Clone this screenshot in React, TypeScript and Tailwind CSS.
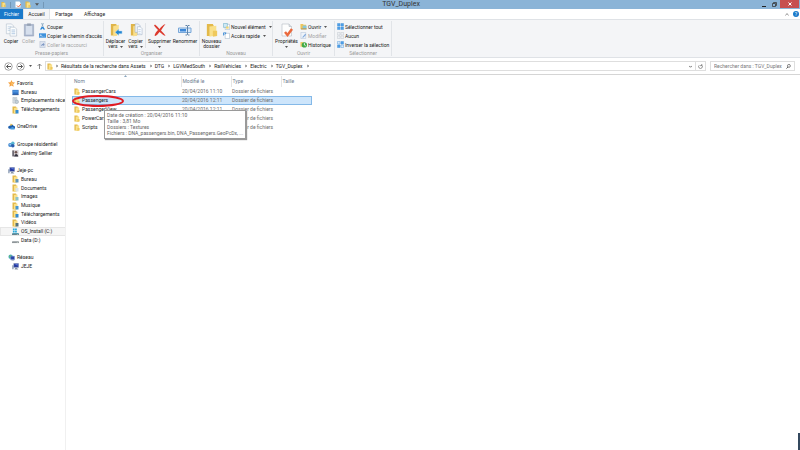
import type { ReactNode } from 'react';

type IconProps = { className?: string };

function Folder({ className = 'w-[7px] h-[8px]' }: IconProps) {
  return (
    <svg viewBox="0 0 14 16" className={`shrink-0 ${className}`}>
      <path d="M1 1h7l1 2v12H1z" fill="#e3b94a" />
      <path d="M4 4l8-1v11l-8 2z" fill="#f9e08a" />
      <path d="M8 9h5v6l-5 1z" fill="#efc95c" />
    </svg>
  );
}

function FolderWith({ color }: { color: string }) {
  return (
    <svg viewBox="0 0 14 16" className="w-[7px] h-[8px] shrink-0">
      <path d="M1 1h7l1 2v12H1z" fill="#e3b94a" />
      <path d="M4 4l7-1v11l-7 2z" fill="#f9e08a" />
      <path d="M7 8h6v7H7z" fill={color} />
    </svg>
  );
}

function Star() {
  return (
    <svg viewBox="0 0 16 16" className="w-[7px] h-[7px] shrink-0">
      <path d="M8 0l2.4 5.2 5.6.6-4.200 3.800L13 15.500 8 12.600 3 15.500l1.200-5.900L0 5.800l5.600-.6z" fill="#f5a03c" />
      <path d="M8 4l1.300 3 3 .4-2.300 2 .6 3L8 10.800z" fill="#fbcf7c" />
    </svg>
  );
}

function Desktop() {
  return (
    <svg viewBox="0 0 16 16" className="w-[7px] h-[7px] shrink-0">
      <path d="M1 2h14v11H1z" fill="#2f6fc2" />
      <path d="M2 3h12v5H2z" fill="#4c92dd" />
      <path d="M1 12h14v2H1z" fill="#234f8f" />
    </svg>
  );
}

function Recent() {
  return (
    <svg viewBox="0 0 16 16" className="w-[7px] h-[7px] shrink-0">
      <path d="M2 1h9v13H2z" fill="#dfe4e8" stroke="#9aa7b2" />
      <path d="M4 4h5M4 7h5" stroke="#8ca0b3" />
      <circle cx="11" cy="11" r="4" fill="#c3d0d9" stroke="#8c9aa5" />
    </svg>
  );
}

function Cloud() {
  return (
    <svg viewBox="0 0 16 16" className="w-[7px] h-[7px] shrink-0">
      <path d="M1 12a4 4 0 0 1 3-6 5 5 0 0 1 9 1 3 3 0 0 1 1 6H3z" fill="#1d5fae" />
      <path d="M6 15a3 3 0 0 1 2-5 3 3 0 0 1 5 1 2 2 0 0 1 1 4z" fill="#4c9be0" />
      <path d="M6 1l5 3-6 3z" fill="#efc14e" />
    </svg>
  );
}

function HomeGroup() {
  return (
    <svg viewBox="0 0 16 16" className="w-[7px] h-[7px] shrink-0">
      <circle cx="5" cy="9" r="4.500" fill="#3c83cf" />
      <circle cx="11" cy="5" r="4" fill="#57b6d3" />
      <circle cx="11" cy="11" r="4" fill="#2c5fae" />
      <circle cx="5" cy="8" r="2" fill="#9bd0ef" />
    </svg>
  );
}

function User() {
  return (
    <svg viewBox="0 0 16 16" className="w-[7px] h-[7px] shrink-0">
      <path d="M1 0h14v16H1z" fill="#d8d2d6" />
      <path d="M1 1h3v13H1z" fill="#4a4650" />
      <circle cx="9" cy="5" r="3" fill="#6d5450" />
      <path d="M5 15c0-8 9-8 9 0z" fill="#33323e" />
    </svg>
  );
}

function Computer() {
  return (
    <svg viewBox="0 0 16 16" className="w-[7px] h-[7px] shrink-0">
      <path d="M0 5h4v9H0z" fill="#a5b2c4" />
      <path d="M4 1h11v9H4z" fill="#24389e" stroke="#8393b8" />
      <path d="M6 3l7-1v4z" fill="#5b79da" />
      <path d="M7 11h5v2h2v2H6v-2h1z" fill="#8794a5" />
    </svg>
  );
}

function Network() {
  return (
    <svg viewBox="0 0 16 16" className="w-[7px] h-[7px] shrink-0">
      <circle cx="6" cy="6" r="5" fill="#41a6c9" />
      <path d="M2 4l5-2 1 4-4 3z" fill="#68bd70" />
      <path d="M6 5h9v8H6z" fill="#2945a8" stroke="#8ca4d4" />
      <path d="M8 14h6v1H8z" fill="#7887a0" />
    </svg>
  );
}

function Drive({ system = false }: { system?: boolean }) {
  return (
    <svg viewBox="0 0 16 16" className="w-[7px] h-[8px] shrink-0">
      {system && <path d="M2 0h4v4H2zM7 0h4v4H7zM2 5h4v4H2zM7 5h4v4H7z" fill="#25a9dc" />}
      <path d="M1 10h14l1 4H0z" fill={system ? '#4fa0b8' : '#b5babd'} />
      <path d="M0 12h16v3H0z" fill={system ? '#66838e' : '#8f9599'} />
      <path d="M11 13h3v1h-3z" fill="#e6f3df" />
    </svg>
  );
}

function Pages() {
  return (
    <svg viewBox="0 0 26 30" className="w-[13px] h-[14px]">
      <path d="M2 2h11l4 4v17H2z" fill="#f8fafc" stroke="#a5b3c2" />
      <path d="M5 8h8M5 12h8M5 16h8" stroke="#9cb7d5" />
      <path d="M10 9h10l4 4v15H10z" fill="#fdfefe" stroke="#9aabbd" />
      <path d="M13 15h8M13 19h8M13 23h8" stroke="#8fb1d7" strokeWidth="1.500" />
    </svg>
  );
}

function Clipboard() {
  return (
    <svg viewBox="0 0 24 30" className="w-[12px] h-[14px]">
      <path d="M2 3h20v25H2z" fill="#a9b5cb" stroke="#8c9bb7" />
      <path d="M5 6h14v19H5z" fill="#d6dfed" />
      <path d="M8 1h8v5H8z" fill="#95a1b3" />
    </svg>
  );
}

function FolderMove({ copy = false }: { copy?: boolean }) {
  return (
    <svg viewBox="0 0 28 30" className="w-[14px] h-[14px]">
      <path d="M3 2h11l2 3v22H3z" fill="#dfb54a" />
      <path d="M8 7l12-3v21L8 29z" fill="#f9df8c" />
      {copy ? (
        <>
          <path d="M12 2h7l4 4v14H12z" fill="#eef3f8" stroke="#8fa3bb" />
          <path d="M17 8h6l4 4v13H17z" fill="#fbfdff" stroke="#8fa3bb" />
          <path d="M19 14h5M19 18h5M19 22h5" stroke="#88add6" />
        </>
      ) : (
        <path d="M12 20l8-7v4h7v6h-7v4z" fill="#2386d2" stroke="#c7e2f6" />
      )}
    </svg>
  );
}

function DeleteIcon() {
  return (
    <svg viewBox="0 0 28 28" className="w-[14px] h-[14px]">
      <path d="M4 3c3 2 6 6 9 9C17 7 20 4 25 2c-3 4-6 8-9 13 4 4 7 7 9 11-5-2-8-5-12-8-3 4-5 6-8 8l-2-1c1-4 4-8 7-11C7 11 4 8 2 5z" fill="#dc3a2e" />
    </svg>
  );
}

function RenameIcon() {
  return (
    <svg viewBox="0 0 28 28" className="w-[14px] h-[14px]">
      <path d="M1 10h25v9H1z" fill="#d5e7f9" stroke="#78a7d8" strokeWidth="2" />
      <path d="M4 12h12v5H4z" fill="#3c87d8" />
      <path d="M15 5h3l1 1 1-1h3M19 6v17M15 24h3l1-1 1 1h3" fill="none" stroke="#5f83a8" strokeWidth="2" />
    </svg>
  );
}

function PropertiesIcon() {
  return (
    <svg viewBox="0 0 24 28" className="w-[12px] h-[14px]">
      <path d="M2 2h14l5 5v19H2z" fill="#fdfdfd" stroke="#a7aeb7" />
      <path d="M16 2v5h5" fill="#dde2e8" stroke="#a7aeb7" />
      <path d="M8 18l5 6L22 12" fill="none" stroke="#ea6a3d" strokeWidth="5" />
    </svg>
  );
}

const smallIcon = 'w-[7px] h-[7px] shrink-0';

function Scissors() {
  return (
    <svg viewBox="0 0 16 16" className={smallIcon}>
      <path d="M6 10L10 0M10 10L6 0" stroke="#8aa9c4" strokeWidth="2" />
      <path d="M6 9h4l4 6h-4l-2-3-2 3H2z" fill="#2784d6" />
    </svg>
  );
}

function PathIcon() {
  return (
    <svg viewBox="0 0 16 16" className={smallIcon}>
      <path d="M0 3h16v10H0z" fill="#3e91dc" />
      <path d="M2 10l2-4 2 4M8 10h1M11 10h1" stroke="#fff" fill="none" strokeWidth="1.500" />
    </svg>
  );
}

function Shortcut() {
  return (
    <svg viewBox="0 0 16 16" className={smallIcon}>
      <path d="M2 1h12v14H2z" fill="#dce3ef" stroke="#a5b3ca" />
      <path d="M5 12c0-4 2-5 4-5V4l4 4-4 4V9" fill="#7f98c4" />
    </svg>
  );
}

function NewItem({ link = false }: { link?: boolean }) {
  return (
    <svg viewBox="0 0 16 16" className={smallIcon}>
      <path d="M5 3h10v12H5z" fill="#fff" stroke="#8aa2b7" />
      {link ? (
        <path d="M1 8V2h6M4 6l3-4" fill="none" stroke="#3386d3" strokeWidth="2" />
      ) : (
        <>
          <path d="M1 1h9v9H1z" fill="#cfe9f4" stroke="#4797b7" />
          <path d="M7 8h6v5H7z" fill="#efd476" />
        </>
      )}
    </svg>
  );
}

function OpenIcon() {
  return (
    <svg viewBox="0 0 16 16" className={smallIcon}>
      <path d="M1 2h6l1 2h6v9H1z" fill="#edc65c" />
      <path d="M6 6h9v7H6z" fill="#85c7db" />
      <path d="M2 12h13v3H2z" fill="#b59c58" />
    </svg>
  );
}

function EditIcon() {
  return (
    <svg viewBox="0 0 16 16" className={smallIcon}>
      <path d="M2 1h11v14H2z" fill="#edf3fa" stroke="#a3b6ce" />
      <path d="M5 12l7-8 2 2-7 7z" fill="#7fa7db" />
    </svg>
  );
}

function HistoryIcon() {
  return (
    <svg viewBox="0 0 16 16" className={smallIcon}>
      <path d="M1 2h7l1 2v9H1z" fill="#ebca69" />
      <circle cx="10" cy="9" r="6" fill="#3eaa49" />
      <path d="M10 5v4l3 2" stroke="#fff" fill="none" strokeWidth="2" />
    </svg>
  );
}

function SelectIcon({ mode }: { mode: 'all' | 'none' | 'invert' }) {
  const on = '#4d9fe8';
  const off = '#eef1f4';
  const a = mode === 'none' ? off : mode === 'all' ? on : '#d9eafa';
  const b = mode === 'none' ? off : on;
  const line = mode === 'none' ? '#bcc2c9' : '#4a93d9';
  return (
    <svg viewBox="0 0 16 16" className={smallIcon}>
      <path d="M1 1h6v6H1z" fill={a} stroke={line} />
      <path d="M9 1h6v6H9z" fill={b} stroke={line} />
      <path d="M1 9h6v6H1z" fill={b} stroke={line} />
      <path d="M9 9h6v6H9z" fill={a} stroke={line} />
    </svg>
  );
}

function Caret({ className = 'w-[3px] h-[2px]' }: IconProps) {
  return (
    <svg viewBox="0 0 6 4" className={`shrink-0 ${className}`}>
      <path d="M0 0h6L3 4z" fill="#555" />
    </svg>
  );
}

function Chevron() {
  return (
    <svg viewBox="0 0 6 8" className="w-[3px] h-[4px] shrink-0">
      <path d="M1 1l3 3-3 3z" fill="#555" />
    </svg>
  );
}

type BigProps = { icon: ReactNode; lines: string[]; width: string; muted?: boolean; caret?: boolean };

function BigButton({ icon, lines, width, muted, caret }: BigProps) {
  return (
    <button type="button" className={`flex flex-col items-center shrink-0 pt-[2px] ${width} ${muted ? 'text-[#a3a3a3]' : ''}`}>
      {icon}
      {lines.map((line, i) => (
        <span key={line} className="flex items-center gap-[2px] leading-[5px] first-of-type:mt-[2px] whitespace-nowrap">
          {line}
          {caret && lines.length > 1 && i === lines.length - 1 && <Caret />}
        </span>
      ))}
      {caret && lines.length === 1 && <Caret className="w-[3px] h-[2px] mt-[2px]" />}
    </button>
  );
}

type SmallProps = { icon: ReactNode; label: string; muted?: boolean; caret?: boolean };

function SmallButton({ icon, label, muted, caret }: SmallProps) {
  return (
    <button type="button" className={`flex items-center gap-px h-[9px] whitespace-nowrap ${muted ? 'text-[#a3a3a3]' : ''}`}>
      {icon}
      {label}
      {caret && <Caret className="w-[3px] h-[2px] ml-[2px]" />}
    </button>
  );
}

function Group({ title, width, children }: { title: string; width: string; children: ReactNode }) {
  return (
    <section className={`flex flex-col shrink-0 border-r border-[#e1e4e8] ${width}`}>
      <div className="flex flex-1">{children}</div>
      <div className="text-center text-[#9a9a9a] leading-[5px]">{title}</div>
    </section>
  );
}

const tree: ({ label: string; icon: ReactNode; root?: boolean; active?: boolean } | null)[] = [
  { label: 'Favoris', icon: <Star />, root: true },
  { label: 'Bureau', icon: <Desktop /> },
  { label: 'Emplacements récents', icon: <Recent /> },
  { label: 'Téléchargements', icon: <FolderWith color="#348bd1" /> },
  null,
  { label: 'OneDrive', icon: <Cloud />, root: true },
  null,
  { label: 'Groupe résidentiel', icon: <HomeGroup />, root: true },
  { label: 'Jérémy Sellier', icon: <User /> },
  null,
  { label: 'Jeje-pc', icon: <Computer />, root: true },
  { label: 'Bureau', icon: <FolderWith color="#5e95bc" /> },
  { label: 'Documents', icon: <FolderWith color="#dbe4e9" /> },
  { label: 'Images', icon: <FolderWith color="#8dc3cb" /> },
  { label: 'Musique', icon: <FolderWith color="#4697d1" /> },
  { label: 'Téléchargements', icon: <FolderWith color="#348bd1" /> },
  { label: 'Vidéos', icon: <FolderWith color="#56727c" /> },
  { label: 'OS_Install (C:)', icon: <Drive system />, active: true },
  { label: 'Data (D:)', icon: <Drive /> },
  null,
  { label: 'Réseau', icon: <Network />, root: true },
  { label: 'JEJE', icon: <Computer /> },
];

const files = [
  { name: 'PassengerCars', date: '20/04/2016 11:10' },
  { name: 'Passengers', date: '20/04/2016 12:11', selected: true },
  { name: 'PassengerView', date: '20/04/2016 12:11' },
  { name: 'PowerCars', date: '20/04/2016 12:11' },
  { name: 'Scripts', date: '20/04/2016 12:11' },
];

const crumbs = ['Résultats de la recherche dans Assets', 'DTG', 'LGVMedSouth', 'RailVehicles', 'Electric', 'TGV_Duplex'];

function TitleBar() {
  return (
    <header className="flex items-center h-[9px] bg-[#8bb4d7] text-[#333]">
      <div className="flex items-center gap-1 pl-px">
        <Folder className="w-[5px] h-[7px]" />
        <span className="w-px h-[6px] bg-[#7397b6]" />
        <button type="button" aria-label="Propriétés">
          <svg viewBox="0 0 12 14" className="w-[6px] h-[7px]">
            <path d="M1 1h8l2 3v9H1z" fill="#fff" />
            <path d="M4 9l3 3 5-6" fill="none" stroke="#e8683c" strokeWidth="2" />
          </svg>
        </button>
        <button type="button" aria-label="Nouveau dossier"><Folder className="w-[6px] h-[7px]" /></button>
        <button type="button" aria-label="Personnaliser"><Caret className="w-[4px] h-[3px]" /></button>
        <span className="w-px h-[6px] bg-[#7397b6]" />
      </div>
      <h1 className="flex-1 text-center text-[7px] leading-[9px]">TGV_Duplex</h1>
      <div className="flex items-center h-full">
        <button type="button" aria-label="Réduire" className="w-[11px] flex justify-center pt-[3px]">
          <span className="w-[4px] h-px bg-[#222]" />
        </button>
        <button type="button" aria-label="Restaurer" className="w-[11px] flex justify-center">
          <svg viewBox="0 0 10 10" className="w-[5px] h-[5px]">
            <path d="M3 3V1h6v6H7M1 3h6v6H1z" fill="none" stroke="#333" strokeWidth="1.500" />
          </svg>
        </button>
        <button type="button" aria-label="Fermer" className="w-[19px] h-[8px] mr-px self-start bg-[#c75050] flex items-center justify-center">
          <svg viewBox="0 0 8 8" className="w-[4px] h-[4px]">
            <path d="M1 1l6 6M7 1L1 7" stroke="#fff" strokeWidth="2" />
          </svg>
        </button>
      </div>
    </header>
  );
}

function Ribbon() {
  return (
    <div className="flex h-[39px] pt-px pb-px bg-[#f4f5f7] border-y border-[#dfe2e6] leading-[6px]">
      <Group title="Presse-papiers" width="w-[104px]">
        <BigButton icon={<Pages />} lines={['Copier']} width="w-[22px]" />
        <BigButton icon={<Clipboard />} lines={['Coller']} width="w-[13px]" muted />
        <div className="pl-[4px] pt-px">
          <SmallButton icon={<Scissors />} label="Couper" />
          <SmallButton icon={<PathIcon />} label="Copier le chemin d'accès" />
          <SmallButton icon={<Shortcut />} label="Coller le raccourci" muted />
        </div>
      </Group>
      <Group title="Organiser" width="w-[96px]">
        <BigButton icon={<FolderMove />} lines={['Déplacer', 'vers']} width="w-[23px]" caret />
        <BigButton icon={<FolderMove copy />} lines={['Copier', 'vers']} width="w-[17px]" caret />
        <span className="w-px h-[25px] mt-[2px] ml-px bg-[#dfe2e6]" />
        <BigButton icon={<DeleteIcon />} lines={['Supprimer']} width="w-[27px]" caret />
        <BigButton icon={<RenameIcon />} lines={['Renommer']} width="w-[24px]" />
      </Group>
      <Group title="Nouveau" width="w-[73px]">
        <BigButton icon={<Folder className="w-[12px] h-[14px]" />} lines={['Nouveau', 'dossier']} width="w-[23px]" />
        <div className="pt-px">
          <SmallButton icon={<NewItem />} label="Nouvel élément" caret />
          <SmallButton icon={<NewItem link />} label="Accès rapide" caret />
        </div>
      </Group>
      <Group title="Ouvrir" width="w-[62px]">
        <BigButton icon={<PropertiesIcon />} lines={['Propriétés']} width="w-[27px]" caret />
        <div className="pt-px">
          <SmallButton icon={<OpenIcon />} label="Ouvrir" caret />
          <SmallButton icon={<EditIcon />} label="Modifier" muted />
          <SmallButton icon={<HistoryIcon />} label="Historique" />
        </div>
      </Group>
      <Group title="Sélectionner" width="w-[57px]">
        <div className="pl-[2px] pt-px">
          <SmallButton icon={<SelectIcon mode="all" />} label="Sélectionner tout" />
          <SmallButton icon={<SelectIcon mode="none" />} label="Aucun" />
          <SmallButton icon={<SelectIcon mode="invert" />} label="Inverser la sélection" />
        </div>
      </Group>
    </div>
  );
}

function NavArrow({ label, d }: { label: string; d: string }) {
  return (
    <button type="button" aria-label={label}>
      <svg viewBox="0 0 18 18" className="w-[9px] h-[9px]">
        <circle cx="9" cy="9" r="7.500" fill="#fff" stroke="#888" strokeWidth="1.500" />
        <path d={d} fill="none" stroke="#555" strokeWidth="2" />
      </svg>
    </button>
  );
}

function AddressBar() {
  return (
    <div className="flex items-center h-[17px] pl-1 pr-[5px] border-b border-[#d5d5d5] bg-white">
      <NavArrow label="Précédent" d="M14 9H5M9 5L5 9l4 4" />
      <span className="w-[3px]" />
      <NavArrow label="Suivant" d="M4 9h9M9 5l4 4-4 4" />
      <button type="button" aria-label="Emplacements récents" className="px-[4px]"><Caret /></button>
      <button type="button" aria-label="Dossier parent" className="px-px">
        <svg viewBox="0 0 10 12" className="w-[5px] h-[6px]">
          <path d="M5 12V2M1 6l4-4 4 4" fill="none" stroke="#666" strokeWidth="1.500" />
        </svg>
      </button>
      <nav className="flex flex-1 items-center h-[10px] ml-[2px] pl-px border border-[#dedede]">
        <Folder className="w-[6px] h-[7px]" />
        <span className="w-[3px]" />
        <Chevron />
        {crumbs.map((crumb) => (
          <span key={crumb} className="flex items-center">
            <a href="#" className="pl-[2px] pr-[4px] whitespace-nowrap">{crumb}</a>
            <Chevron />
          </span>
        ))}
        <span className="flex-1" />
        <button type="button" aria-label="Historique des adresses" className="px-[3px]">
          <svg viewBox="0 0 6 5" className="w-[3px] h-[3px]"><path d="M0 1l3 3 3-3" fill="none" stroke="#444" strokeWidth="1.500" /></svg>
        </button>
        <button type="button" aria-label="Actualiser" className="flex items-center justify-center w-[10px] h-full border-l border-[#dedede]">
          <svg viewBox="0 0 12 12" className="w-[5px] h-[5px]"><path d="M9 3a4.500 4.500 0 1 1-6 0M9 0v4H5" fill="none" stroke="#555" strokeWidth="1.500" /></svg>
        </button>
      </nav>
      <label className="flex items-center w-[85px] h-[10px] ml-[4px] px-[3px] border border-[#dedede]">
        <input type="text" aria-label="Rechercher" placeholder="Rechercher dans : TGV_Duplex" className="flex-1 min-w-0 outline-none placeholder:text-[#777]" />
        <svg viewBox="0 0 12 12" className="w-[5px] h-[5px]">
          <circle cx="7" cy="4.500" r="3.500" fill="none" stroke="#444" strokeWidth="1.500" />
          <path d="M5 7l-4 4" stroke="#444" strokeWidth="2" />
        </svg>
      </label>
    </div>
  );
}

function Sidebar() {
  return (
    <nav className="w-[66px] shrink-0 border-r border-[#f0f0f0] pt-1 overflow-hidden">
      <ul className="grid h-[192px] auto-rows-fr">
        {tree.map((item, i) =>
          item ? (
            <li key={i} className={`min-h-0 flex ${item.active ? 'bg-[#f5f5f5] outline outline-[#e6e6e6] -outline-offset-1' : ''}`}>
              <a href="#" className={`flex items-center gap-[2px] whitespace-nowrap ${item.root ? 'pl-2' : 'pl-3'}`}>
                {item.icon}
                {item.label}
              </a>
            </li>
          ) : (
            <li key={i} />
          ),
        )}
      </ul>
    </nav>
  );
}

function FileList() {
  return (
    <main className="relative flex-1 pl-[6px] pt-px">
      <table className="table-fixed w-[240px] text-[#6d6d6d] border-collapse">
        <thead>
          <tr className="h-[11px] text-left text-[#6b7a8d]">
            <th className="w-[109px] pl-[2px] pb-px pt-0 font-normal">
              <button type="button" className="block">Nom</button>
            </th>
            <th className="w-[50px] pl-[1px] pb-px pt-0 font-normal border-l border-[#e5e5e5]">Modifié le</th>
            <th className="w-[50px] pl-[1px] pb-px pt-0 font-normal border-l border-[#e5e5e5]">Type</th>
            <th className="pl-[1px] pb-px pt-0 font-normal border-l border-[#e5e5e5]">Taille</th>
          </tr>
        </thead>
        <tbody>
          {files.map((file) => (
            <tr key={file.name} className={`h-[9px] leading-[7px] ${file.selected ? 'bg-[#cde5fb] outline outline-[#84b9e8] -outline-offset-1' : ''}`}>
              <td className="pl-[2px] py-0">
                <a href="#" className="flex items-center gap-[2px] text-[#222]">
                  <Folder className="w-[6px] h-[7px]" />
                  {file.name}
                </a>
              </td>
              <td className="pl-[1px] py-0 whitespace-nowrap">{file.date}</td>
              <td className="pl-[1px] py-0 whitespace-nowrap">Dossier de fichiers</td>
              <td />
            </tr>
          ))}
        </tbody>
      </table>

      {/* sort arrow over the name column */}
      <svg viewBox="0 0 6 4" className="absolute left-[58px] top-0 w-[3px] h-[2px]">
        <path d="M0 4l3-4 3 4z" fill="#8aa5bd" />
      </svg>

      {/* tooltip of the hovered folder */}
      <div role="tooltip" className="absolute left-[38px] top-[35px] px-[2px] pt-px pb-[2px] bg-white border border-[#9a9a9a] text-[#666] leading-[6px] whitespace-nowrap shadow-[1px_1px_1px_#999]">
        <p>Date de création : 20/04/2016 11:10</p>
        <p>Taille : 3,81 Mo</p>
        <p>Dossiers : Textures</p>
        <p>Fichiers : DNA_passengers.bin, DNA_Passengers.GeoPcDx, ...</p>
      </div>

      {/* red marker */}
      <svg viewBox="0 0 52 12" className="absolute left-[6px] top-[20px] w-[52px] h-[12px]">
        <ellipse cx="26" cy="6" rx="25" ry="5" fill="none" stroke="#e01a22" strokeWidth="2" />
      </svg>
    </main>
  );
}

export default function App() {
  return (
    <div className="relative min-h-screen flex flex-col bg-white text-[5px] leading-[7px] text-[#222] font-['Roboto','Open_Sans',sans-serif]">
      <TitleBar />
      <div className="flex items-center h-[10px] bg-white">
        <button type="button" className="w-[23px] h-full bg-[#1979ca] text-white">Fichier</button>
        <button type="button" className="w-[27px] h-full bg-[#f4f5f7] border-x border-[#dfe2e6]">Accueil</button>
        <button type="button" className="w-[28px]">Partage</button>
        <button type="button" className="w-[33px]">Affichage</button>
        <span className="flex-1" />
        <button type="button" aria-label="Réduire le ruban" className="mr-1">
          <svg viewBox="0 0 8 6" className="w-[4px] h-[3px]"><path d="M1 5l3-4 3 4" fill="none" stroke="#777" strokeWidth="1.500" /></svg>
        </button>
        <button type="button" aria-label="Aide" className="w-[6px] h-[6px] mr-px rounded-full bg-[#1979ca] text-white leading-[6px]">?</button>
      </div>
      <Ribbon />
      <AddressBar />
      <div className="flex flex-1">
        <Sidebar />
        <FileList />
      </div>
      <div className="absolute right-0 bottom-0 w-[2px] h-[17px] bg-[#34495e]" />
    </div>
  );
}
